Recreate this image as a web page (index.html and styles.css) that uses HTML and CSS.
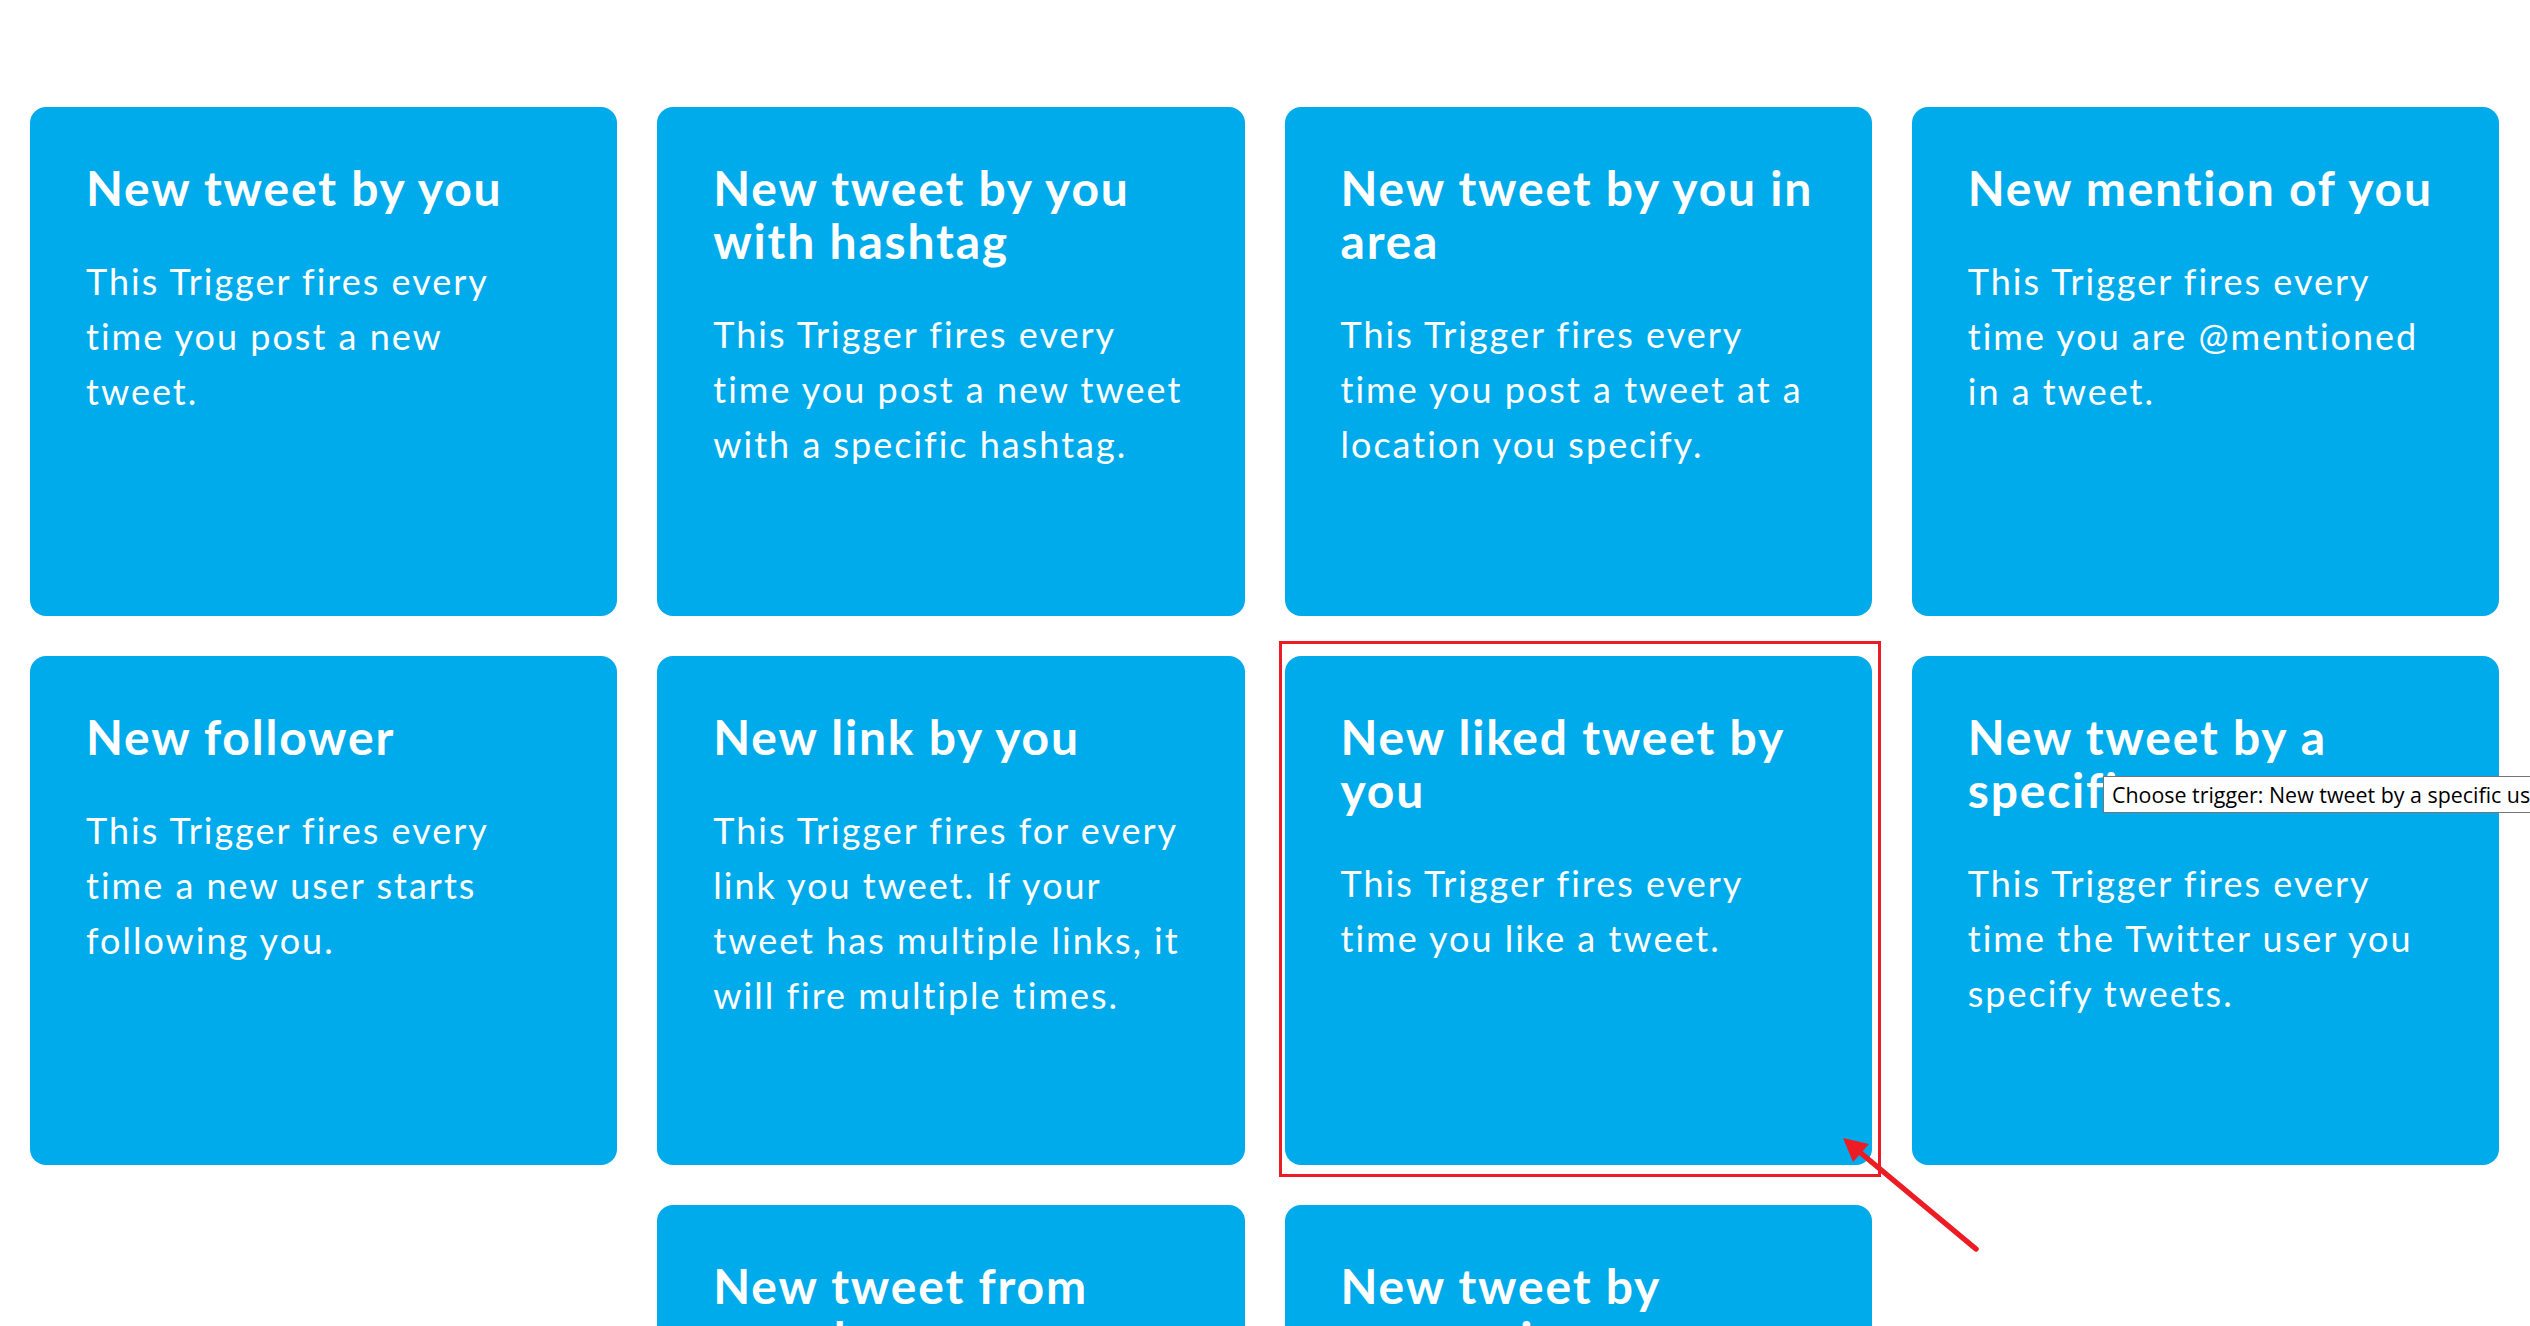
FILE: index.html
```html
<!DOCTYPE html>
<html lang="en">
<head>
<meta charset="utf-8">
<title>Choose trigger</title>
<link rel="stylesheet" href="styles.css">
</head>
<body>
<main class="triggers">
  <a class="card" href="#">
    <h2 class="card-title">New tweet by you</h2>
    <p class="card-desc">This Trigger fires every<br>time you post a new<br>tweet.</p>
  </a>
  <a class="card" href="#">
    <h2 class="card-title">New tweet by you<br>with hashtag</h2>
    <p class="card-desc">This Trigger fires every<br>time you post a new tweet<br>with a specific hashtag.</p>
  </a>
  <a class="card" href="#">
    <h2 class="card-title">New tweet by you in<br>area</h2>
    <p class="card-desc">This Trigger fires every<br>time you post a tweet at a<br>location you specify.</p>
  </a>
  <a class="card" href="#">
    <h2 class="card-title">New mention of you</h2>
    <p class="card-desc">This Trigger fires every<br>time you are @mentioned<br>in a tweet.</p>
  </a>
  <a class="card" href="#">
    <h2 class="card-title">New follower</h2>
    <p class="card-desc">This Trigger fires every<br>time a new user starts<br>following you.</p>
  </a>
  <a class="card" href="#">
    <h2 class="card-title">New link by you</h2>
    <p class="card-desc">This Trigger fires for every<br>link you tweet. If your<br>tweet has multiple links, it<br>will fire multiple times.</p>
  </a>
  <a class="card" href="#">
    <h2 class="card-title">New liked tweet by<br>you</h2>
    <p class="card-desc">This Trigger fires every<br>time you like a tweet.</p>
  </a>
  <a class="card" href="#">
    <h2 class="card-title">New tweet by a<br>specific user</h2>
    <p class="card-desc">This Trigger fires every<br>time the Twitter user you<br>specify tweets.</p>
  </a>
  <a class="card" href="#">
    <h2 class="card-title">New tweet from<br>search</h2>
    <p class="card-desc">This Trigger fires every<br>time a new tweet matches<br>your search.</p>
  </a>
  <a class="card" href="#">
    <h2 class="card-title">New tweet by<br>anyone in area</h2>
    <p class="card-desc">This Trigger fires every<br>time anyone posts a tweet<br>in an area you specify.</p>
  </a>
</main>

<div class="highlight-box"></div>
<svg class="highlight-arrow" width="2530" height="1326" viewBox="0 0 2530 1326" aria-hidden="true">
  <line x1="1976" y1="1249" x2="1856" y2="1149" stroke="#ed1c24" stroke-width="5.5" stroke-linecap="round"/>
  <polygon points="1843,1138 1869,1144 1853,1162" fill="#ed1c24"/>
</svg>

<div class="tooltip">Choose trigger: New tweet by a specific user</div>
</body>
</html>
```

FILE: styles.css
```css
html, body {
  margin: 0;
  padding: 0;
  width: 2530px;
  height: 1326px;
  overflow: hidden;
  background: #ffffff;
}

body {
  position: relative;
  font-family: Lato, "Open Sans", "Noto Sans", sans-serif;
}

.triggers {
  display: flex;
  flex-wrap: wrap;
  justify-content: center;
  gap: 40px;
  padding: 107px 31px 0 30px;
}

.card {
  box-sizing: border-box;
  width: calc((100% - 120px) / 4);
  height: 509px;
  padding: 54px 56px 0 56px;
  background: #00abec;
  border-radius: 16px;
  color: #ffffff;
  text-decoration: none;
}

.card-title {
  margin: 0;
  font-size: 48px;
  line-height: 53px;
  font-weight: 700;
  letter-spacing: 1.8px;
}

.card-desc {
  margin: 40px 0 0 0;
  font-size: 36px;
  line-height: 55px;
  font-weight: 400;
  letter-spacing: 2px;
}

.highlight-box {
  position: absolute;
  left: 1279px;
  top: 641px;
  width: 602px;
  height: 536px;
  box-sizing: border-box;
  border: 3px solid #ed1c24;
  pointer-events: none;
}

.highlight-arrow {
  position: absolute;
  left: 0;
  top: 0;
  pointer-events: none;
}

.tooltip {
  position: absolute;
  left: 2103px;
  top: 776px;
  height: 37px;
  box-sizing: border-box;
  padding: 0 8px;
  border: 1px solid #767676;
  background: #ffffff;
  color: #000000;
  font-family: "Open Sans", "Noto Sans", sans-serif;
  font-size: 21.4px;
  line-height: 35px;
  white-space: nowrap;
}
```
